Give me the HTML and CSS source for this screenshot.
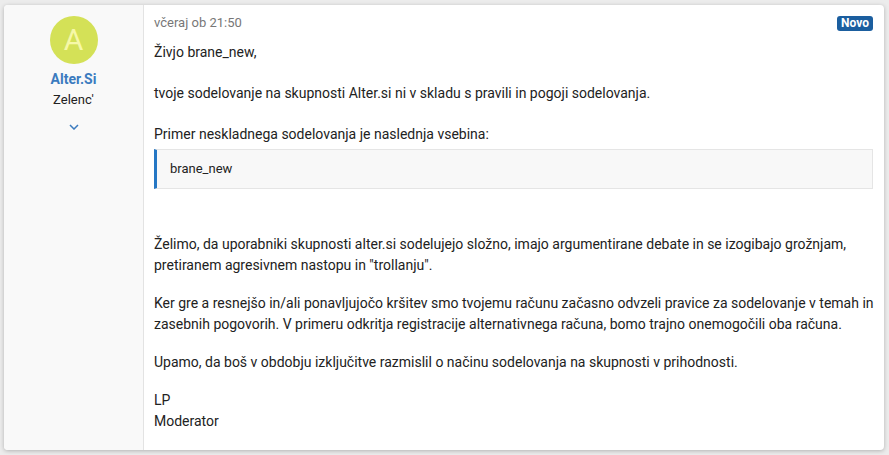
FILE: index.html
```html
<!DOCTYPE html>
<html lang="sl">

<head>
    <meta charset="UTF-8">
    <meta name="viewport" content="width=device-width, initial-scale=1.0">
    <title>Sporočilo moderatorja</title>
    <link rel="stylesheet" href="styles.css">
</head>

<body>
    <div class="message">
        <div class="message-user">
            <div class="avatar">A</div>
            <a class="username">Alter.Si</a>
            <div class="user-title">Zelenc'</div>
            <svg class="user-toggle" width="10" height="6" viewBox="0 0 10 6">
                <path d="M1 1 L5 5 L9 1" fill="none" stroke="#3b7bbf" stroke-width="1.5" />
            </svg>
        </div>
        <div class="message-main">
            <div class="message-attribution">
                <span class="message-date">včeraj ob 21:50</span>
                <span class="badge">Novo</span>
            </div>
            <div class="message-body">
                <p class="intro">Živjo brane_new,</p>
                <p class="intro">tvoje sodelovanje na skupnosti Alter.si ni v skladu s pravili in pogoji sodelovanja.</p>
                <p class="before-quote">Primer neskladnega sodelovanja je naslednja vsebina:</p>
                <blockquote class="quote">brane_new</blockquote>
                <p>Želimo, da uporabniki skupnosti alter.si sodelujejo složno, imajo argumentirane debate in se izogibajo grožnjam, pretiranem agresivnem nastopu in "trollanju".</p>
                <p>Ker gre a resnejšo in/ali ponavljujočo kršitev smo tvojemu računu začasno odvzeli pravice za sodelovanje v temah in zasebnih pogovorih. V primeru odkritja registracije alternativnega računa, bomo trajno onemogočili oba računa.</p>
                <p>Upamo, da boš v obdobju izključitve razmislil o načinu sodelovanja na skupnosti v prihodnosti.</p>
                <p>LP<br>Moderator</p>
            </div>
        </div>
    </div>
</body>

</html>
```

FILE: styles.css
```css
body {
    font-family: Roboto, "Liberation Sans", Arial, sans-serif;
    background-color: #ececec;
    margin: 0;
    padding: 5px 5px 5px 4px;
}

.message {
    display: flex;
    width: 880px;
    height: 445px;
    background-color: #fff;
    border-radius: 4px;
    box-shadow: 0 1px 4px rgba(0, 0, 0, 0.25);
    overflow: hidden;
}

.message-user {
    width: 139px;
    flex-shrink: 0;
    background-color: #f9f9f9;
    border-right: 1px solid #e3e3e3;
    display: flex;
    flex-direction: column;
    align-items: center;
    padding-top: 11px;
}

.avatar {
    width: 48px;
    height: 48px;
    border-radius: 50%;
    background-color: #d4e157;
    color: #f6f8a8;
    font-size: 30px;
    line-height: 48px;
    text-align: center;
}

.username {
    margin-top: 5px;
    color: #3b7bbf;
    font-weight: bold;
    font-size: 14px;
    line-height: 20px;
}

.user-title {
    margin-top: 2px;
    color: #222;
    font-size: 13px;
    line-height: 18px;
}

.user-toggle {
    margin-top: 15px;
}

.message-main {
    flex: 1;
    padding: 9px 6px 0 10px;
    color: #222;
}

.message-attribution {
    display: flex;
    justify-content: space-between;
    align-items: center;
    margin: 0 5px 10px 0;
}

.message-date {
    color: #777;
    font-size: 13px;
    line-height: 18px;
}

.badge {
    background-color: #1b5e9f;
    color: #fff;
    font-size: 12px;
    font-weight: bold;
    line-height: 15px;
    padding: 0 4px;
    border-radius: 3px;
}

.message-body {
    font-size: 14px;
    line-height: 21px;
}

.message-body p {
    margin: 0 0 17px 0;
}

.message-body p.intro {
    margin-bottom: 20px;
}

.message-body p.before-quote {
    margin-bottom: 4px;
}

.quote {
    margin: 0 5px 45px 0;
    padding: 9px 13px 9px 13px;
    background-color: #f8f8f8;
    border: 1px solid #e5e5e5;
    border-left: 3px solid #2577c4;
    font-size: 13px;
    line-height: 20px;
}
```
